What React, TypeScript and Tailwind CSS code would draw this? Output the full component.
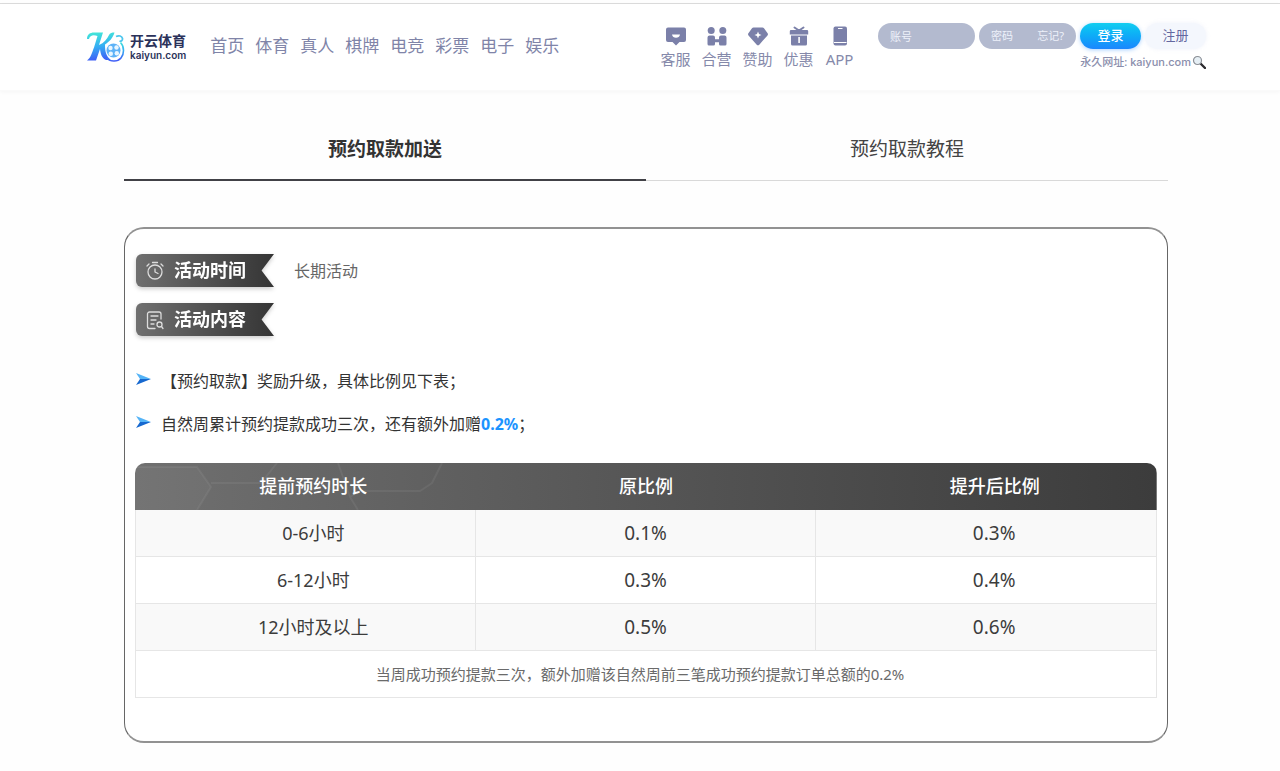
import { useState, type ReactNode } from "react";

const navItems = ["首页", "体育", "真人", "棋牌", "电竞", "彩票", "电子", "娱乐"];

const rows = [
  { time: "0-6小时", before: "0.1%", after: "0.3%" },
  { time: "6-12小时", before: "0.3%", after: "0.4%" },
  { time: "12小时及以上", before: "0.5%", after: "0.6%" },
];

const services: { label: string; icon: ReactNode }[] = [
  {
    label: "客服",
    icon: (
      <>
        <path fill="currentColor" d="M2 1.500h16a2 2 0 0 1 2 2V14a2 2 0 0 1-2 2h-4.500L10 19.500 6.500 16H2a2 2 0 0 1-2-2V3.500a2 2 0 0 1 2-2z" />
        <path fill="#fff" d="M6 8.500h8c-.3 2.200-2 3.300-4 3.300s-3.700-1.100-4-3.300z" />
      </>
    ),
  },
  {
    label: "合营",
    icon: (
      <g fill="currentColor">
        <circle cx="4.200" cy="4.500" r="3.500" />
        <circle cx="15.800" cy="4.500" r="3.500" />
        <path d="M2.500 9.500h3.500a2 2 0 0 1 2 2v1.700h4v-1.700a2 2 0 0 1 2-2h3.500a2 2 0 0 1 2 2V18a1.500 1.500 0 0 1-1.500 1.500h-4.500A1.500 1.500 0 0 1 12 18v-1.800H8V18a1.500 1.500 0 0 1-1.500 1.500H2A1.500 1.500 0 0 1 .5 18v-6.500a2 2 0 0 1 2-2z" />
      </g>
    ),
  },
  {
    label: "赞助",
    icon: (
      <>
        <path fill="currentColor" d="M5.500 1.500h9a2 2 0 0 1 1.500.7l3.600 5a1.800 1.800 0 0 1-.1 2.200l-8 9a2 2 0 0 1-3 0l-8-9a1.800 1.800 0 0 1-.1-2.200l3.600-5a2 2 0 0 1 1.500-.7z" />
        <path fill="#fff" d="M10 5.500l1 2.500 2.500 1-2.500 1-1 2.500L9 10 6.500 9 9 8z" />
      </>
    ),
  },
  {
    label: "优惠",
    icon: (
      <>
        <path d="M5.500 1.500L10 4.500l4.500-3" fill="none" stroke="currentColor" strokeWidth="2" strokeLinecap="round" />
        <path fill="currentColor" d="M2 4h16a1.200 1.200 0 0 1 1.200 1.200V8.500H.8V5.200A1.200 1.200 0 0 1 2 4zM2 9.500h16v8.500a1.500 1.500 0 0 1-1.500 1.500h-13A1.500 1.500 0 0 1 2 18z" />
        <path fill="#fff" d="M9.300 11h1.600v6H9.300z" />
      </>
    ),
  },
  {
    label: "APP",
    icon: (
      <>
        <rect x="3.500" y=".5" width="13.500" height="19" rx="2" fill="currentColor" />
        <path d="M4 16.500h12.500M8 2.500h4.500" stroke="#fff" strokeWidth="1" />
      </>
    ),
  },
];

function Logo() {
  return (
    <a href="#" className="flex shrink-0 items-center gap-1" aria-label="开云体育">
      <svg viewBox="0 0 40 32" className="h-8 w-10" aria-hidden="true">
        <defs>
          <linearGradient id="logo" x1="0.3" y1="0" x2="0.4" y2="1">
            <stop offset="0" stopColor="#43e6d8" />
            <stop offset="0.5" stopColor="#35aef3" />
            <stop offset="1" stopColor="#3f5cf6" />
          </linearGradient>
        </defs>
        <path
          fill="url(#logo)"
          d="M1 8C1 3.500 4 1.500 8 1.500h9L13 14C18 12 21 8 23 4c1-2 3-2.500 5.500-2.500C27 7 23 11 19 13.500c0 7 1 11 5.500 15.500H20c-4-2-5.500-6-6-11L10 29.500H1c4-3 5-8 7-13L11.500 5C7 3.500 4 4.500 3 8z"
        />
        <path
          d="M21 27c2 2.500 4 3 7 3 6 0 9.500-4.500 9.500-10.500 0-3.500-1-6-3-8"
          fill="none"
          stroke="url(#logo)"
          strokeWidth="1.600"
        />
        <path d="M30 5.500c3-1.500 6-.5 6.500 2 .3 2-1.500 3-3 2.500" fill="none" stroke="#4cc6ee" strokeWidth="1.800" />
        <circle cx="27.500" cy="19.500" r="7" fill="#5db2f7" />
        <g fill="#e9f6ff">
          <circle cx="24.500" cy="17" r="2.200" />
          <circle cx="30.500" cy="16.500" r="2.200" />
          <circle cx="24.800" cy="22.800" r="2.200" />
          <circle cx="30.800" cy="22.300" r="2.200" />
        </g>
      </svg>
      <span className="flex flex-col text-[#2b325a]">
        <span className="text-[14px] leading-4 font-bold">开云体育</span>
        <span className="font-[Inter] text-[10px] leading-3 font-semibold">kaiyun.com</span>
      </span>
    </a>
  );
}

function Ribbon({ icon, children }: { icon: ReactNode; children: ReactNode }) {
  return (
    <div className="drop-shadow-[0_2px_2px_rgba(0,0,0,0.2)]">
      <h2 className="flex h-[33px] w-[138px] items-center gap-2 rounded-l-md bg-linear-to-r from-[#707070] to-[#353535] pl-2 text-[18px] font-bold text-white [clip-path:polygon(0_0,100%_0,91%_50%,100%_100%,0_100%)]">
        <svg viewBox="0 0 22 22" className="size-[22px] shrink-0" fill="none" stroke="#dcdcdc" strokeWidth="1.300" strokeLinecap="round" strokeLinejoin="round" aria-hidden="true">
          {icon}
        </svg>
        {children}
      </h2>
    </div>
  );
}

function Bullet({ children }: { children: ReactNode }) {
  return (
    <li className="flex items-center gap-[10px]">
      <svg viewBox="0 0 16 12" className="mb-1 h-3 w-4 shrink-0" aria-hidden="true">
        <path fill="#55b4f7" d="M1 0l15 6H5z" />
        <path fill="#1668cf" d="M5 6h11L1 12z" />
      </svg>
      <span>{children}</span>
    </li>
  );
}

function Header() {
  return (
    <header className="border-b border-[#fafafa] bg-white pl-3 shadow-[0_1px_4px_rgba(0,0,0,0.04)]">
      <div className="mx-auto flex h-[86px] max-w-[1120px] items-center">
        <Logo />
        <nav className="ml-6 flex gap-[11px] pb-0.5 text-[17px] leading-6 whitespace-nowrap text-[#8084a8]">
          {navItems.map((item) => (
            <a key={item} href="#">{item}</a>
          ))}
        </nav>

        <div className="ml-auto flex pt-px text-[#7b80a9]">
          {services.map(({ label, icon }) => (
            <a key={label} href="#" className="flex w-[41px] flex-col items-center gap-[3px]">
              <svg viewBox="0 0 20 20" className="size-5" aria-hidden="true">{icon}</svg>
              <span className="text-[15px] leading-5 whitespace-nowrap text-[#8589aa]">{label}</span>
            </a>
          ))}
        </div>

        <form className="ml-[18px] shrink-0 pt-1" onSubmit={(e) => e.preventDefault()}>
          <div className="flex gap-1">
            <input
              type="text"
              aria-label="账号"
              placeholder="账号"
              className="h-[26px] w-[97px] rounded-full bg-[#b3bacf] px-3 text-[11px] text-white outline-none placeholder:text-[#eef1fa]"
            />
            <div className="flex h-[26px] w-[97px] items-center rounded-full bg-[#b3bacf] px-3 text-[11px] text-[#eef1fa]">
              <input
                type="password"
                aria-label="密码"
                placeholder="密码"
                className="w-0 min-w-0 flex-1 outline-none placeholder:text-[#eef1fa]"
              />
              <button type="button">忘记?</button>
            </div>
            <button type="submit" className="h-[26px] w-[61px] rounded-full bg-linear-to-b from-[#12cdf0] to-[#1c86fd] text-[13px] font-medium text-white shadow-[0_1px_4px_rgba(40,140,255,0.4)]">
              登录
            </button>
            <button type="button" className="h-[26px] w-[61px] rounded-full bg-[#f4f7fd] text-[13px] text-[#6468a0] shadow-[0_0_4px_rgba(200,210,240,0.3)]">
              注册
            </button>
          </div>
          <p className="flex items-center justify-end text-[11px] leading-[26px] font-medium text-[#8a8eac]">
            <span>永久网址: <span className="font-[Inter]">kaiyun.com</span></span>
            <svg viewBox="0 0 14 14" className="ml-px size-[14px]" aria-hidden="true">
              <path d="M8 8l5 5" stroke="#2c2c30" strokeWidth="2.400" strokeLinecap="round" />
              <circle cx="5.500" cy="5.500" r="4" fill="#e6eff5" stroke="#8b8f96" strokeWidth="1.200" />
            </svg>
          </p>
        </form>
      </div>
    </header>
  );
}

export default function App() {
  const [tab, setTab] = useState(0);

  return (
    <div className="min-h-screen bg-[#fefefe] font-['Noto_Sans','Noto_Sans_CJK_SC',sans-serif]">
      <div className="h-1 border-b border-[#dcdcdc]" />
      <Header />

      <main className="pt-7 pb-7 pl-3">
        <div className="mx-auto max-w-[1044px]">
          <div role="tablist" className="flex border-b border-[#d9d9d9]">
            {["预约取款加送", "预约取款教程"].map((name, i) => (
              <button
                key={name}
                type="button"
                role="tab"
                aria-selected={tab === i}
                onClick={() => setTab(i)}
                className={`-mb-px h-[62px] flex-1 border-b-2 text-[19px] cursor-pointer ${
                  tab === i ? "border-[#414146] font-bold text-[#333]" : "border-transparent text-[#444]"
                }`}
              >
                {name}
              </button>
            ))}
          </div>

          <section className="mt-[46px] rounded-[20px] border-x border-y-2 border-x-[#666] border-y-[#929292] bg-white px-[10px] pt-[25px] pb-[43px]">
            <div className="flex items-center gap-5 pl-px">
              <Ribbon
                icon={
                  <>
                    <circle cx="11" cy="12" r="7" />
                    <path d="M11 9v3l3 1.500M8.500 2.500h5M3 6l2-2M19 6l-2-2" />
                  </>
                }
              >
                活动时间
              </Ribbon>
              <span className="text-[16px] text-[#666]">长期活动</span>
            </div>
            <div className="mt-4 pl-px">
              <Ribbon
                icon={
                  <>
                    <path d="M17 10V5a2 2 0 0 0-2-2H5.500a2 2 0 0 0-2 2v12.500a2 2 0 0 0 2 2H11M7 7h7M7 11h5M7 15h3" />
                    <circle cx="15.500" cy="15.500" r="2.500" />
                    <path d="M17.500 17.500l1.500 2" />
                  </>
                }
              >
                活动内容
              </Ribbon>
            </div>

            <ul className="mt-[33px] flex flex-col gap-[19px] text-[16px] leading-6 text-[#333]">
              <Bullet>【预约取款】奖励升级，具体比例见下表；</Bullet>
              <Bullet>
                自然周累计预约提款成功三次，还有额外加赠<b className="text-[#1b93ff]">0.2%</b>；
              </Bullet>
            </ul>

            <div className="relative mt-[27px] overflow-hidden rounded-t-[10px]">
              <table className="w-full table-fixed border-separate border-spacing-0 text-center text-[18px] text-[#3c3c3c]">
                <thead className="bg-linear-to-r from-[#707070] to-[#3c3c3c] text-white">
                  <tr className="h-[47px]">
                    <th className="pl-4 font-medium">提前预约时长</th>
                    <th className="font-medium">原比例</th>
                    <th className="pl-4 font-medium">提升后比例</th>
                  </tr>
                </thead>
                <tbody>
                  {rows.map((row) => (
                    <tr key={row.time} className="h-[47px] odd:bg-[#f9f9f9] even:bg-white">
                      <td className="border-x border-b border-[#e6e6e6] pl-4">{row.time}</td>
                      <td className="border-r border-b border-[#e6e6e6] text-[19px]">{row.before}</td>
                      <td className="border-r border-b border-[#e6e6e6] pl-4 text-[19px]">{row.after}</td>
                    </tr>
                  ))}
                  <tr className="h-[47px]">
                    <td colSpan={3} className="border-x border-b border-[#e6e6e6] pr-3 text-[15px] text-[#6a6a6a]">
                      当周成功预约提款三次，额外加赠该自然周前三笔成功预约提款订单总额的0.2%
                    </td>
                  </tr>
                </tbody>
              </table>
              {/* faint hexagons over the table head */}
              <svg viewBox="0 0 320 47" className="pointer-events-none absolute top-0 left-0 h-[47px] w-80" fill="none" stroke="#fff" strokeOpacity="0.06" strokeWidth="2" aria-hidden="true">
                <path d="M0 4h62l14 20-14 23M76 20h50l16-20M215 34l10-6h60l12-8 10-20M215 34l-12-34M215 34l8 13" />
                <path d="M0 4h62l14 20-14 23H0z" fill="#fff" fillOpacity="0.03" stroke="none" />
              </svg>
            </div>
          </section>
        </div>
      </main>
    </div>
  );
}
